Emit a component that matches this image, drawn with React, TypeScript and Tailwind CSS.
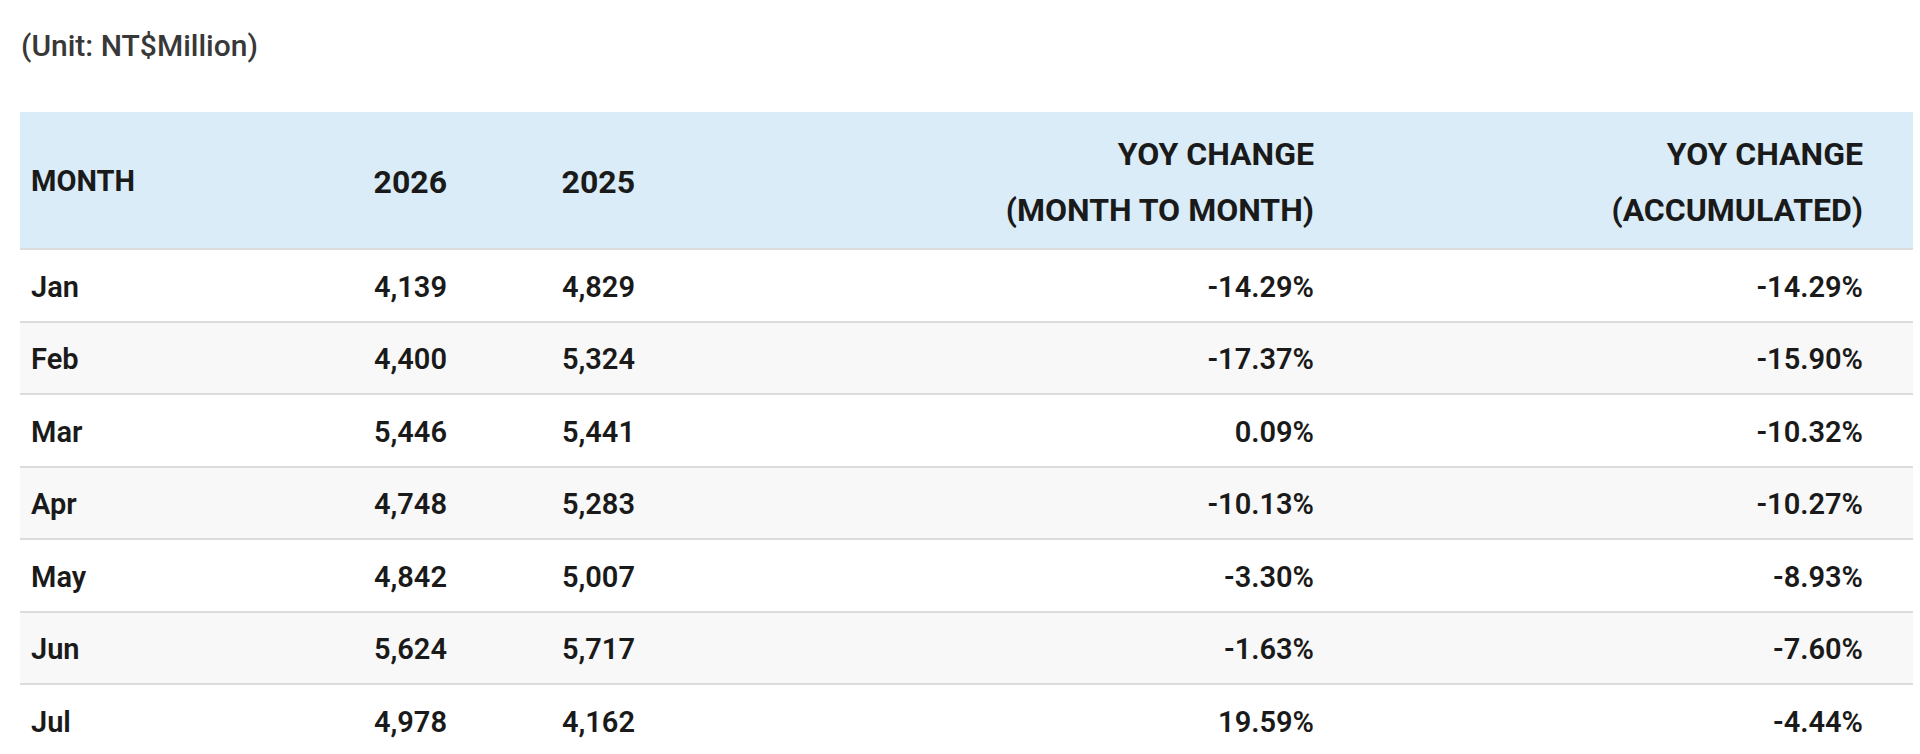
import React from "react";

const rows = [
  ["Jan", "4,139", "4,829", "-14.29%", "-14.29%"],
  ["Feb", "4,400", "5,324", "-17.37%", "-15.90%"],
  ["Mar", "5,446", "5,441", "0.09%", "-10.32%"],
  ["Apr", "4,748", "5,283", "-10.13%", "-10.27%"],
  ["May", "4,842", "5,007", "-3.30%", "-8.93%"],
  ["Jun", "5,624", "5,717", "-1.63%", "-7.60%"],
  ["Jul", "4,978", "4,162", "19.59%", "-4.44%"],
];

export default function App() {
  return (
    <div
      className="w-[1920px] h-[754px] overflow-hidden bg-white pt-[26px] pl-[20px] text-[#1a1a1a]"
      style={{ fontFamily: "Roboto, 'Noto Sans', sans-serif" }}
    >
      <div className="h-[40px] leading-[40px] pl-[1px] text-[30px] font-medium text-[#383838]">
        (Unit: NT$Million)
      </div>
      <table className="mt-[46px] w-[1893px] table-fixed border-collapse">
        <colgroup>
          <col className="w-[257px]" />
          <col className="w-[180px]" />
          <col className="w-[188px]" />
          <col className="w-[679px]" />
          <col className="w-[589px]" />
        </colgroup>
        <thead>
          <tr className="h-[137px] bg-[#d9ecf7] border-b-2 border-[#dcdcdc]">
            <th className="pl-[11px] pt-[4px] text-left align-middle text-[29px] font-bold">
              MONTH
            </th>
            <th className="pr-[10px] pt-[4px] text-right align-middle text-[32px] font-bold">
              2026
            </th>
            <th className="pr-[10px] pt-[4px] text-right align-middle text-[32px] font-bold">
              2025
            </th>
            <th className="pr-[10px] pt-[4px] text-right align-middle text-[32px] leading-[56px] font-bold">
              YOY CHANGE
              <br />
              (MONTH TO MONTH)
            </th>
            <th className="pr-[50px] pt-[4px] text-right align-middle text-[32px] leading-[56px] font-bold">
              YOY CHANGE
              <br />
              (ACCUMULATED)
            </th>
          </tr>
        </thead>
        <tbody>
          {rows.map((r, i) => (
            <tr
              key={r[0]}
              className={`h-[72.5px] border-b-2 border-[#dcdcdc] text-[29px] font-semibold ${
                i % 2 === 1 ? "bg-[#f8f8f8]" : "bg-white"
              }`}
            >
              <td className="pl-[11px] pt-[4px] text-left align-middle">{r[0]}</td>
              <td className="pr-[10px] pt-[4px] text-right align-middle">{r[1]}</td>
              <td className="pr-[10px] pt-[4px] text-right align-middle">{r[2]}</td>
              <td className="pr-[10px] pt-[4px] text-right align-middle">{r[3]}</td>
              <td className="pr-[50px] pt-[4px] text-right align-middle">{r[4]}</td>
            </tr>
          ))}
        </tbody>
      </table>
    </div>
  );
}
